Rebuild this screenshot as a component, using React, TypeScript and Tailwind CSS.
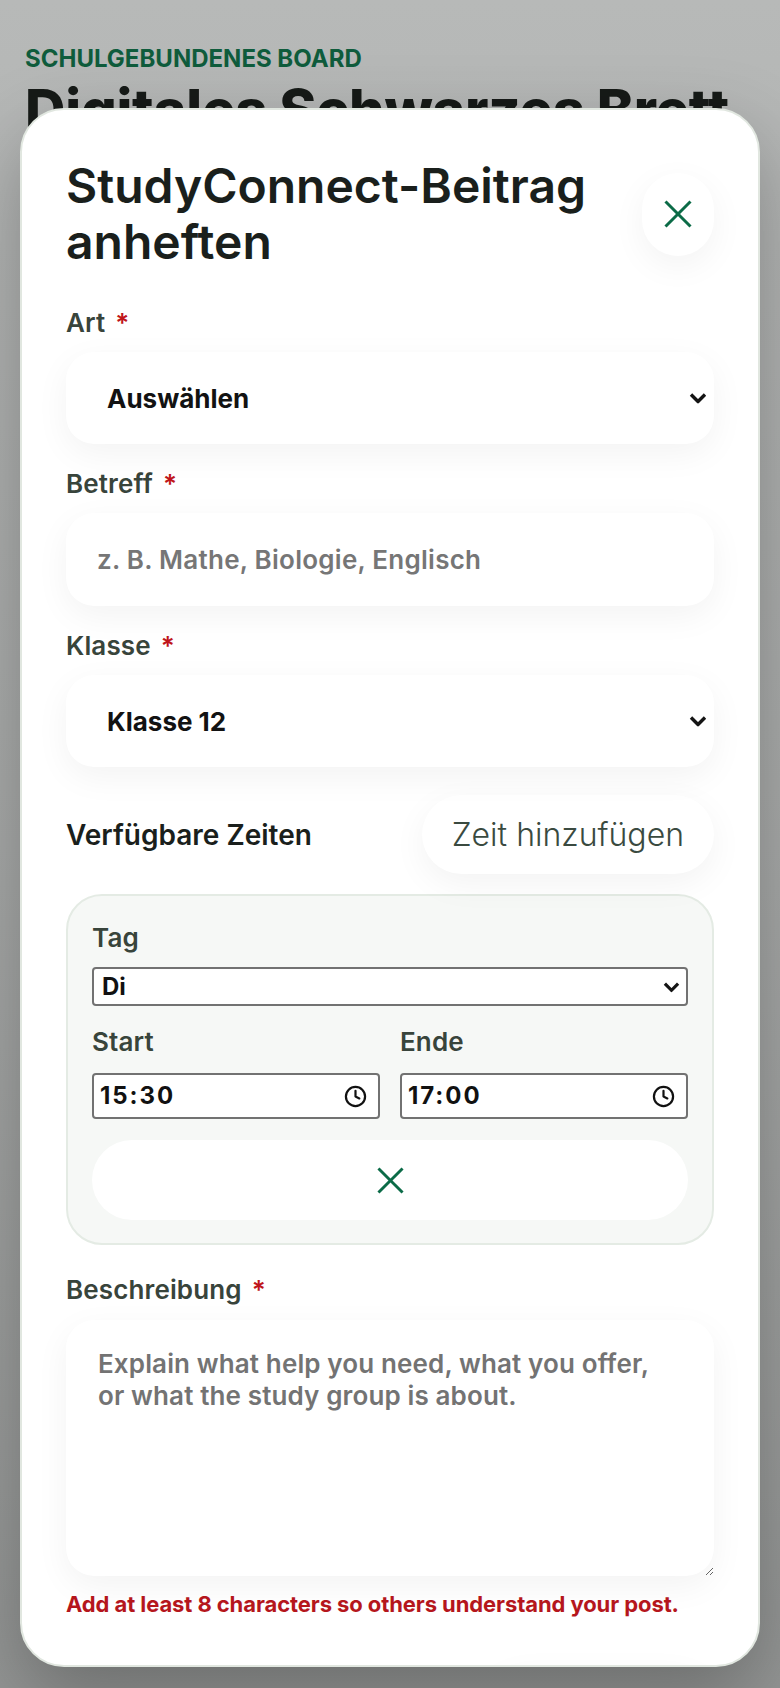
import React from "react";
import { Clock } from "lucide-react";

function XIcon({ size = 28 }: { size?: number }) {
  return (
    <svg width={size} height={size} viewBox="0 0 28 28" fill="none" stroke="#0b6b47" strokeWidth="3">
      <line x1="1.5" y1="1.5" x2="26.5" y2="26.5" />
      <line x1="26.5" y1="1.5" x2="1.5" y2="26.5" />
    </svg>
  );
}

function Chevron({ w = 18, h = 11 }: { w?: number; h?: number }) {
  return (
    <svg width={w} height={h} viewBox="0 0 18 11" fill="none" stroke="#141414" strokeWidth="3.4" strokeLinejoin="miter">
      <polyline points="2,2 9,9 16,2" />
    </svg>
  );
}

function Label({ children, required = true }: { children: React.ReactNode; required?: boolean }) {
  return (
    <label className="block text-[26px] leading-[36px] font-semibold tracking-[0.005em] text-[#38443b]">
      {children}
      {required && <span className="ml-[10px] text-[#c0151a]">*</span>}
    </label>
  );
}

const fieldShadow = "shadow-[0_10px_34px_rgba(0,0,0,0.05)]";

export default function App() {
  return (
    <div className="relative h-[1688px] w-full overflow-hidden bg-gradient-to-b from-[#b7b9b8] via-[#a9abaa] to-[#949695] [font-family:Inter,sans-serif]">
      {/* background page */}
      <div className="px-[25px] pt-[43px]">
        <p className="text-[24px] leading-[32px] font-bold tracking-normal text-[#0f5c3c]">SCHULGEBUNDENES BOARD</p>
        <h1 className="mt-[4px] text-[56px] leading-[62px] font-extrabold tracking-[-0.004em] text-[#161a17]">
          Digitales Schwarzes Brett
        </h1>
      </div>

      {/* modal */}
      <div className="absolute left-[20px] top-[108px] h-[1559px] w-[740px] overflow-hidden rounded-[44px] border-2 border-[#e1e7e0] bg-white shadow-[0_30px_80px_rgba(0,0,0,0.28)]">
        <div className="px-[44px] pt-[48px]">
          <div className="flex items-center justify-between gap-[20px]">
            <h2 className="max-w-[560px] text-[48px] leading-[56px] font-semibold tracking-normal text-[#1a1f1c]">
              StudyConnect-Beitrag anheften
            </h2>
            <button className={`flex h-[83px] w-[72px] shrink-0 items-center justify-center rounded-full bg-white ${fieldShadow}`}>
              <XIcon size={28} />
            </button>
          </div>

          {/* Art */}
          <div className="mt-[35px]">
            <Label>Art</Label>
            <div className="relative mt-[11px]">
              <select className={`h-[92px] w-full appearance-none rounded-[28px] bg-white pl-[41px] text-[26px] font-bold text-[#121212] ${fieldShadow}`} defaultValue="">
                <option value="">Auswählen</option>
                <option value="a">Nachhilfe</option>
              </select>
              <span className="pointer-events-none absolute right-[7px] top-1/2 -translate-y-1/2">
                <Chevron />
              </span>
            </div>
          </div>

          {/* Betreff */}
          <div className="mt-[22px]">
            <Label>Betreff</Label>
            <input
              className={`mt-[11px] h-[93px] w-full rounded-[28px] bg-white px-[31px] text-[26px] font-semibold tracking-[0.01em] text-[#121212] placeholder:text-[#767676] ${fieldShadow}`}
              placeholder="z. B. Mathe, Biologie, Englisch"
            />
          </div>

          {/* Klasse */}
          <div className="mt-[22px]">
            <Label>Klasse</Label>
            <div className="relative mt-[11px]">
              <select className={`h-[92px] w-full appearance-none rounded-[28px] bg-white pl-[41px] text-[26px] font-bold text-[#121212] ${fieldShadow}`} defaultValue="12">
                <option value="12">Klasse 12</option>
              </select>
              <span className="pointer-events-none absolute right-[7px] top-1/2 -translate-y-1/2">
                <Chevron />
              </span>
            </div>
          </div>

          {/* Verfügbare Zeiten */}
          <div className="mt-[28px] flex items-center justify-between">
            <h3 className="text-[28px] leading-[36px] font-semibold tracking-normal text-[#1a1f1c]">Verfügbare Zeiten</h3>
            <button className={`h-[79px] rounded-full bg-white px-[30px] text-[32px] font-light text-[#3a4a40] ${fieldShadow}`}>
              Zeit hinzufügen
            </button>
          </div>

          {/* Time slot card */}
          <div className="mt-[20px] rounded-[36px] border-2 border-[#e4ebe4] bg-[#f6f8f6] px-[24px] pt-[24px] pb-[23px]">
            <label className="block text-[26px] leading-[36px] font-semibold tracking-[0.005em] text-[#38443b]">Tag</label>
            <div className="relative mt-[11px]">
              <select className="h-[39px] w-full appearance-none rounded-[4px] border-2 border-[#727272] bg-white pl-[8px] text-[24px] font-bold text-[#111]" defaultValue="Di">
                <option>Mo</option>
                <option>Di</option>
                <option>Mi</option>
              </select>
              <span className="pointer-events-none absolute right-[8px] top-1/2 -translate-y-1/2">
                <Chevron w={17} h={11} />
              </span>
            </div>

            <div className="mt-[18px] grid grid-cols-2 gap-[20px]">
              <div>
                <label className="block text-[26px] leading-[36px] font-semibold tracking-[0.005em] text-[#38443b]">Start</label>
                <div className="mt-[13px] flex h-[46px] items-center justify-between rounded-[4px] border-2 border-[#727272] bg-white pl-[6px] pr-[11px]">
                  <span className="text-[24px] font-bold tracking-[0.08em] text-[#111]">15:30</span>
                  <Clock size={23} strokeWidth={2.3} color="#111" />
                </div>
              </div>
              <div>
                <label className="block text-[26px] leading-[36px] font-semibold tracking-[0.005em] text-[#38443b]">Ende</label>
                <div className="mt-[13px] flex h-[46px] items-center justify-between rounded-[4px] border-2 border-[#727272] bg-white pl-[6px] pr-[11px]">
                  <span className="text-[24px] font-bold tracking-[0.08em] text-[#111]">17:00</span>
                  <Clock size={23} strokeWidth={2.3} color="#111" />
                </div>
              </div>
            </div>

            <button className="mt-[21px] flex h-[80px] w-full items-center justify-center rounded-full bg-white">
              <XIcon size={27} />
            </button>
          </div>

          {/* Beschreibung */}
          <div className="mt-[27px]">
            <Label>Beschreibung</Label>
            <textarea
              className={`mt-[12px] block h-[256px] w-full rounded-[28px] bg-white pl-[32px] pr-[50px] py-[28px] text-[26px] leading-[32px] font-semibold tracking-[0.005em] text-[#121212] placeholder:text-[#737373] ${fieldShadow}`}
              placeholder="Explain what help you need, what you offer, or what the study group is about."
            />
          </div>

          <p className="mt-[13px] text-[22px] leading-[30px] font-bold tracking-[-0.004em] text-[#b5161c]">
            Add at least 8 characters so others understand your post.
          </p>

          <div className="mt-[48px] flex justify-end">
            <button aria-label="Beitrag anheften" className={`h-[80px] w-[228px] rounded-full bg-white ${fieldShadow}`} />
          </div>
        </div>
      </div>
    </div>
  );
}
